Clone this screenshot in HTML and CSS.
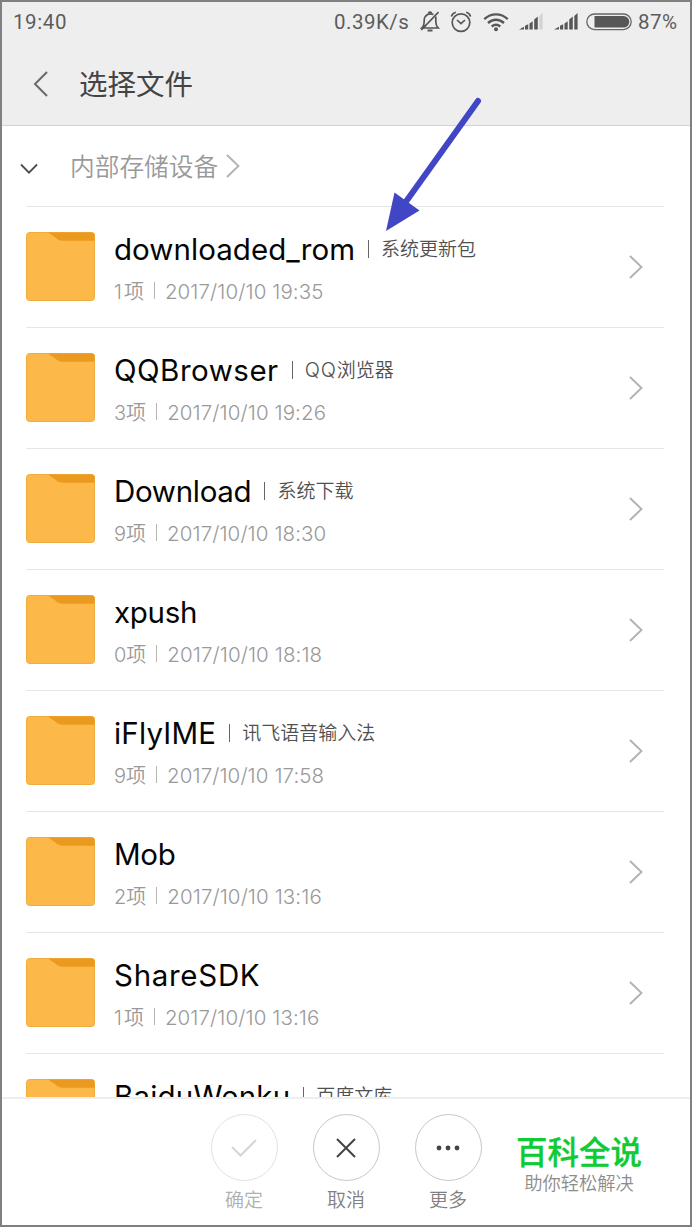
FILE: index.html
```html
<!DOCTYPE html>
<html lang="zh-CN">
<head>
<meta charset="utf-8">
<title>选择文件</title>
<link rel="stylesheet" href="styles.css">
</head>
<body>
<svg class="defs" width="0" height="0">
  <symbol id="folder" viewBox="0 0 69 69">
    <rect x="0.5" y="0.5" width="68" height="68" rx="3" fill="#fcb94a" stroke="#f0ad3f"/>
    <path d="M22 0.5H66a2.6 2.6 0 0 1 2.6 2.6V8.7H37c-3.500 0-5-.8-7-2.700z" fill="#e99a1f"/>
  </symbol>
  <symbol id="next" viewBox="0 0 14 24">
    <path d="M1 1L12.500 12L1 23" fill="none" stroke="#b2b2b2" stroke-width="1.900"/>
  </symbol>
</svg>
<div class="screen">
  <header class="top">
    <div class="status">
      <span class="clock">19:40</span>
      <span class="speed">0.39K/s</span>
      <svg class="ic-bell" width="20" height="22" viewBox="0 0 20 22" fill="none" stroke="#575757" stroke-width="1.700">
        <path d="M6 14.200L1.800 17H18.200C15.800 15 15.800 13 15.800 9.500V5.500M13.500 3.600C9 1.500 4.200 4 4.200 9.500C4.200 13 4.200 15 1.800 17"/>
        <path d="M8.400 2.400C8.700.8 11.300.8 11.600 2.400M1.300 19L18.500 1.200"/><path d="M7.500 19.500H12.500" stroke-width="2"/>
      </svg>
      <svg class="ic-alarm" width="22" height="22" viewBox="0 0 22 22" fill="none" stroke="#575757" stroke-width="1.700">
        <circle cx="11" cy="11.600" r="8.800"/><path d="M7 9L11 12.700L15 9M1.400 5.500C2 3.500 3.500 1.800 5.800 1.200M20.600 5.500C20 3.500 18.500 1.800 16.200 1.200"/>
      </svg>
      <svg class="ic-wifi" width="26" height="20" viewBox="0 0 26 20" fill="none" stroke="#575757" stroke-width="2.400">
        <path d="M1.300 7.200C8 .8 18 .8 24.700 7.200M5 11C9.700 6.700 16.300 6.700 21 11M8.700 14.500C11.300 12.300 14.700 12.300 17.300 14.500"/><circle cx="13" cy="17.300" r="2" fill="#575757" stroke="none"/>
      </svg>
      <svg class="ic-signal" width="25" height="17" viewBox="0 0 25 17" fill="#575757">
        <path d="M0 16.500L5 13.800V16.500ZM6 12.800L9.200 11.300V16.500H6ZM10.500 10.500L13.700 8.200V16.500H10.500ZM15.200 6.500L18.800 3.500V16.500H15.200Z"/><path d="M20.300 3L23.600 0V16.500H20.300Z" fill="#d2d2d2"/>
      </svg>
      <svg class="ic-signal2" width="25" height="17" viewBox="0 0 25 17" fill="#575757">
        <path d="M0 16.500L5 13.800V16.500ZM6 12.800L9.200 11.300V16.500H6ZM10.500 10.500L13.700 8.200V16.500H10.500ZM15.200 6.500L18.800 3.500V16.500H15.200ZM20.300 3L23.600 0V16.500H20.300Z"/>
      </svg>
      <svg class="ic-battery" width="46" height="18" viewBox="0 0 46 18">
        <rect x=".8" y="1" width="44.400" height="15.600" rx="7.800" fill="none" stroke="#666" stroke-width="1.300"/>
        <path d="M8.500 3H37.500a5.800 5.800 0 0 1 0 11.600H8.500Z" fill="#575757"/>
      </svg>
      <span class="percent">87%</span>
    </div>
    <div class="title-row">
      <svg width="16" height="26" viewBox="0 0 16 26"><path d="M14 1L2 13L14 25" fill="none" stroke="#6a6a6a" stroke-width="2"/></svg>
      <h1 class="title">选择文件</h1>
    </div>
  </header>
  <main class="list">
    <div class="crumb">
      <svg class="down" width="18" height="12" viewBox="0 0 18 12"><path d="M1 1.500L9 9.700L17 1.500" fill="none" stroke="#4d4d4d" stroke-width="1.800"/></svg>
      <span class="crumb-text">内部存储设备</span>
      <svg class="crumb-next" width="14" height="24"><use href="#next"/></svg>
    </div>
    <div class="row"><svg class="folder"><use href="#folder"/></svg><div class="info"><div class="line"><span class="name n1">downloaded_rom</span><i class="bar"></i><span class="tag">系统更新包</span></div><div class="meta"><span><span class="one">1</span>项</span><i class="sep"></i><span class="date">2017/10/10 19:35</span></div></div><svg class="next"><use href="#next"/></svg></div>
    <div class="row"><svg class="folder"><use href="#folder"/></svg><div class="info"><div class="line"><span class="name n2">QQBrowser</span><i class="bar"></i><span class="tag"><span class="latin">QQ</span>浏览器</span></div><div class="meta"><span>3项</span><i class="sep"></i><span class="date">2017/10/10 19:26</span></div></div><svg class="next"><use href="#next"/></svg></div>
    <div class="row"><svg class="folder"><use href="#folder"/></svg><div class="info"><div class="line"><span class="name n3">Download</span><i class="bar"></i><span class="tag">系统下载</span></div><div class="meta"><span>9项</span><i class="sep"></i><span class="date">2017/10/10 18:30</span></div></div><svg class="next"><use href="#next"/></svg></div>
    <div class="row"><svg class="folder"><use href="#folder"/></svg><div class="info"><div class="line"><span class="name n4">xpush</span></div><div class="meta"><span>0项</span><i class="sep"></i><span class="date">2017/10/10 18:18</span></div></div><svg class="next"><use href="#next"/></svg></div>
    <div class="row"><svg class="folder"><use href="#folder"/></svg><div class="info"><div class="line"><span class="name n5">iFlyIME</span><i class="bar"></i><span class="tag">讯飞语音输入法</span></div><div class="meta"><span>9项</span><i class="sep"></i><span class="date">2017/10/10 17:58</span></div></div><svg class="next"><use href="#next"/></svg></div>
    <div class="row"><svg class="folder"><use href="#folder"/></svg><div class="info"><div class="line"><span class="name n6">Mob</span></div><div class="meta"><span>2项</span><i class="sep"></i><span class="date">2017/10/10 13:16</span></div></div><svg class="next"><use href="#next"/></svg></div>
    <div class="row"><svg class="folder"><use href="#folder"/></svg><div class="info"><div class="line"><span class="name n7">ShareSDK</span></div><div class="meta"><span><span class="one">1</span>项</span><i class="sep"></i><span class="date">2017/10/10 13:16</span></div></div><svg class="next"><use href="#next"/></svg></div>
    <div class="row"><svg class="folder"><use href="#folder"/></svg><div class="info"><div class="line"><span class="name n8">BaiduWenku</span><i class="bar"></i><span class="tag">百度文库</span></div></div></div>
  </main>
  <footer class="actions">
    <div class="action off"><span class="circle"><svg width="26" height="18" viewBox="0 0 26 18"><path d="M1 8L9.500 16.500L25 1" fill="none" stroke="#d5d5d5" stroke-width="2"/></svg></span><span>确定</span></div>
    <div class="action"><span class="circle"><svg width="20" height="20" viewBox="0 0 20 20"><path d="M1 1L19 19M19 1L1 19" fill="none" stroke="#444" stroke-width="2"/></svg></span><span>取消</span></div>
    <div class="action"><span class="circle"><svg width="24" height="6" viewBox="0 0 24 6" fill="#444"><circle cx="3" cy="3" r="2.400"/><circle cx="12" cy="3" r="2.400"/><circle cx="21" cy="3" r="2.400"/></svg></span><span>更多</span></div>
    <div class="brand"><strong>百科全说</strong><span>助你轻松解决</span></div>
  </footer>
  <svg class="arrow" width="110" height="145" viewBox="380 93 110 145">
    <path d="M478 101L405 203" stroke="#4046c4" stroke-width="6" stroke-linecap="round"/>
    <path d="M386 231L394.500 192.500L419.500 210.500Z" fill="#4046c4"/>
  </svg>
</div>
</body>
</html>
```
FILE: styles.css
```css
* { box-sizing: border-box; }
body { margin: 0; font-family: Inter, "Noto Sans CJK SC", sans-serif; background: #fff; }
svg { display: block; flex: none; }
.defs { position: absolute; }
.screen { position: relative; width: 692px; height: 1227px; border: 2px solid #808080; display: flex; flex-direction: column; overflow: hidden; }
.top { height: 124px; flex: none; background: #eee; border-bottom: 1px solid #d2d2d2; }
.status { height: 40px; display: flex; align-items: center; padding-left: 11px; font-family: Roboto, sans-serif; font-size: 20.500px; color: #5c5c5c; white-space: nowrap; }
.clock { width: 321px; letter-spacing: 0.6px; }
.speed { width: 86px; letter-spacing: 0.5px; }
.ic-alarm { margin-left: 10px; }
.ic-wifi { margin-left: 11px; }
.ic-signal { margin: -1px 0 0 10px; }
.ic-signal2 { margin: -1px 0 0 10px; }
.ic-battery { margin: -1px 0 0 7px; }
.percent { margin-left: 6px; letter-spacing: 0.5px; }
.title-row { height: 83px; display: flex; align-items: center; padding-left: 31px; gap: 30px; }
.title { margin: 3px 0 0; font-size: 28.500px; line-height: 40px; font-weight: 400; color: #444; }
.list { height: 971px; flex: none; overflow: hidden; }
.crumb { height: 80px; margin-left: 18px; display: flex; align-items: center; }
.crumb-text { margin: 2px 0 0 32px; font-size: 24.700px; font-weight: 350; line-height: 36px; color: #999; }
.crumb-next { margin-left: 8px; }
.down { margin-top: 5px; }
.row { height: 121px; margin: 0 26px 0 24px; border-top: 1px solid #e6e6e6; display: flex; align-items: flex-start; padding-top: 25px; }
.folder { width: 69px; height: 69px; }
.info { flex: 1; margin-left: 19px; }
.line { height: 36px; display: flex; align-items: center; white-space: nowrap; }
.name { margin-top: -2px; font-size: 29.500px; line-height: 36px; color: #050505; }
.n1 { letter-spacing: 0.05px; }
.n2 { letter-spacing: 0.5px; }
.n3, .n4, .n6 { letter-spacing: -0.3px; }
.n5 { letter-spacing: 0.2px; }
.n7 { letter-spacing: 0.7px; }
.n8 { letter-spacing: 0.2px; }
.bar { width: 1px; height: 18px; margin: -3px 12px 0 13px; background: #666; }
.tag { font-size: 19px; line-height: 28px; font-weight: 350; color: #505050; margin-top: -1px; }
.latin { font-size: 20px; line-height: 20px; letter-spacing: 0.8px; }
.meta { height: 30px; margin-top: 9px; display: flex; align-items: center; font-size: 20px; line-height: 30px; font-weight: 350; color: #999; white-space: nowrap; }
.one { letter-spacing: 2px; }
.date { font-size: 20.500px; letter-spacing: 0.1px; }
.sep { width: 1px; height: 17px; margin: -3px 10px 0; background: #b5b5b5; }
.next { width: 14px; height: 24px; margin: 23px 21px 0 0; }
.actions { position: relative; flex: 1; border-top: 2px solid #eee; background: #fff; display: flex; padding: 15px 0 0 208px; gap: 34px; }
.action { width: 68px; display: flex; flex-direction: column; align-items: center; font-size: 19px; line-height: 28px; font-weight: 350; color: #808080; gap: 6px; }
.circle { width: 67px; height: 67px; border: 1px solid #c8c8c8; border-radius: 50%; display: flex; align-items: center; justify-content: center; }
.off { color: #b0b0b0; }
.off .circle { border-color: #e2e2e2; }
.brand { display: flex; flex-direction: column; align-items: center; width: 126px; padding-top: 21px; color: #8c8c8c; font-size: 18.300px; line-height: 24px; white-space: nowrap; font-weight: 350; }
.brand strong { color: #0fcb35; font-size: 31.500px; line-height: 36px; font-weight: 500; -webkit-text-stroke: 0.3px #0fcb35; }
.arrow { position: absolute; left: 378px; top: 91px; }
```
